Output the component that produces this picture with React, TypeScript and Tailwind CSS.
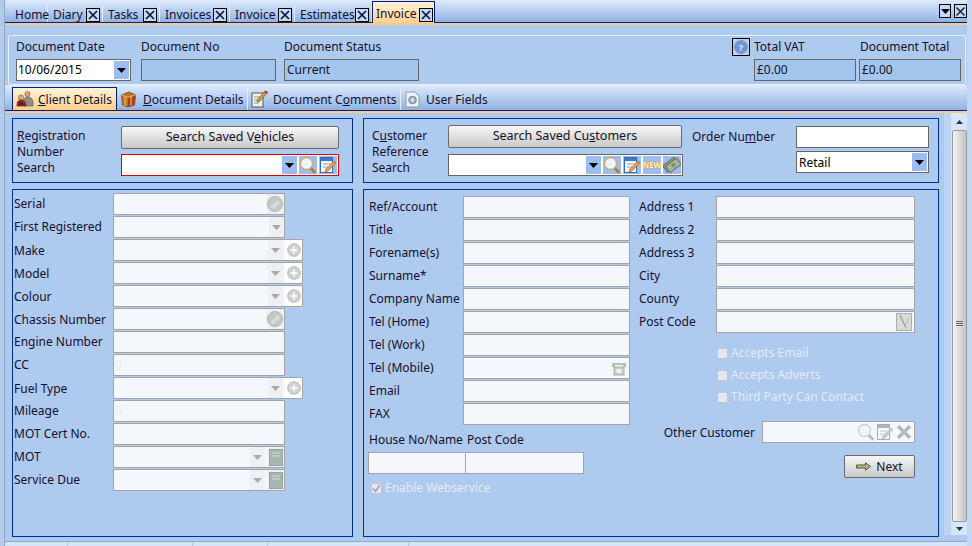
import React from "react";

const NAVY = "border-[#00309c]";

const CloseBox = () => (
  <span className="flex h-[14px] w-[14px] shrink-0 items-center justify-center border border-black bg-[#c3d9f7]">
    <svg width="10" height="10" viewBox="0 0 10 10">
      <path d="M1 1l8 8M9 1l-8 8" stroke="#0b1030" strokeWidth="1.6" />
    </svg>
  </span>
);

const Caret = ({ color = "#000" }: { color?: string }) => (
  <svg width="9" height="5" viewBox="0 0 9 5">
    <path d="M0 0h9L4.5 5z" fill={color} />
  </svg>
);

const CaretBtn = ({ w = "w-[15px]" }: { w?: string }) => (
  <span className={`flex h-[18px] ${w} shrink-0 items-center justify-center bg-[#9dbcf2]`}>
    <Caret />
  </span>
);

const IconBtn = ({ children }: { children: React.ReactNode }) => (
  <span className="flex h-[18px] w-[18px] shrink-0 items-center justify-center bg-[#9dbcf2]">{children}</span>
);

const SearchIcon = () => (
  <svg width="18" height="18" viewBox="0 0 18 18">
    <path d="M10.5 11l5 5" stroke="#a8843f" strokeWidth="3" strokeLinecap="round" />
    <circle cx="7.5" cy="7.5" r="6" fill="#eef5fb" stroke="#c9ad73" strokeWidth="1.4" />
  </svg>
);

const EditIcon = () => (
  <svg width="18" height="18" viewBox="0 0 18 18">
    <rect x="1.5" y="1.5" width="12" height="15" fill="#f3f7fd" stroke="#3a6db5" />
    <rect x="2" y="2" width="11" height="3" fill="#3f78c8" />
    <path d="M4 8h7M4 11h5" stroke="#7ea4d8" />
    <path d="M6 16l1-3 8-8 2 2-8 8z" fill="#ee9c3c" stroke="#a85f16" strokeWidth=".6" />
  </svg>
);

const MoneyIcon = () => (
  <svg width="18" height="18" viewBox="0 0 18 18">
    <g transform="rotate(-38 9 9)">
      <rect x="1" y="4" width="14" height="8" fill="#8d9f88" stroke="#64755f" />
      <rect x="3" y="6" width="14" height="8" fill="#a4b29c" stroke="#64755f" />
      <circle cx="10" cy="10" r="2" fill="#7d8f78" />
    </g>
  </svg>
);

const ClientIcon = () => (
  <svg width="18" height="18" viewBox="0 0 18 18">
    <circle cx="11.5" cy="4" r="2.6" fill="#d9a36b" stroke="#8a5a2c" strokeWidth=".6" />
    <path d="M7 13c0-4 2-6 5-6s5 2 5 6v3H8z" fill="#8e8f86" stroke="#55564e" strokeWidth=".6" />
    <circle cx="5" cy="7.5" r="2.6" fill="#e0a877" stroke="#8a5a2c" strokeWidth=".6" />
    <path d="M1 16c0-4 1-6 4-6s5 2 5 6z" fill="#a3221c" stroke="#5f1410" strokeWidth=".6" />
    <path d="M3 12h4v3H3z" fill="#3d2a20" />
  </svg>
);

const BoxIcon = () => (
  <svg width="17" height="17" viewBox="0 0 17 17">
    <path d="M1.5 4L9 1l6.5 3-1 10L8 16l-5.500-2z" fill="#c46f2a" stroke="#6e3512" strokeWidth=".7" />
    <path d="M8 6.500V16l6.500-2 1-10z" fill="#a8401f" />
    <path d="M1.500 4L8 6.500 15.500 4" fill="none" stroke="#f0b973" />
    <path d="M5 5.500v9.500M11 5.500v9" stroke="#e8c04c" strokeWidth="1.200" />
  </svg>
);

const NoteIcon = () => (
  <svg width="17" height="18" viewBox="0 0 17 18">
    <rect x="1" y="3" width="11" height="14" fill="#f4f1e4" stroke="#4d5a66" />
    <path d="M3 7h7M3 10h6M3 13h5" stroke="#8894a0" />
    <path d="M6 12l1-3 7-8 2 2-7 8z" fill="#d6a13b" stroke="#5d3d10" strokeWidth=".6" />
    <path d="M13 2l2-1.500 2 2-1 1.500z" fill="#c2302a" />
  </svg>
);

const GearDocIcon = () => (
  <svg width="15" height="17" viewBox="0 0 15 17">
    <path d="M1 1h9l4 4v11H1z" fill="#eef3fb" stroke="#8b9db4" />
    <circle cx="7.500" cy="9" r="3.800" fill="#a9b9cc" stroke="#7387a0" />
    <circle cx="7.500" cy="9" r="1.500" fill="#e7edf6" />
  </svg>
);

const HelpIcon = () => (
  <span className="flex h-[18px] w-[18px] items-center justify-center border border-black bg-[#b9d0ef]">
    <span className="flex h-[14px] w-[14px] items-center justify-center rounded-full border border-[#7d9cc8] bg-[#6f97d2] text-[9px] font-bold leading-none text-[#dfe9f8]">
      ?
    </span>
  </span>
);

const DiscIcon = () => (
  <span className="flex h-[20px] w-[18px] shrink-0 items-center justify-center bg-[#eef0f3]">
    <svg width="16" height="16" viewBox="0 0 16 16">
      <circle cx="8" cy="8" r="7.500" fill="#c4c9c8" stroke="#b2b6b6" />
      <path d="M3 11l8-7 2 3-7 6z" fill="#d9dcdc" />
    </svg>
  </span>
);

const PlusBtn = () => (
  <span className="flex h-[20px] w-[17px] shrink-0 items-center justify-center bg-white">
    <svg width="14" height="14" viewBox="0 0 14 14">
      <circle cx="7" cy="7" r="6.300" fill="#cfd3d3" stroke="#b3b8b8" />
      <path d="M7 3.500v7M3.500 7h7" stroke="#f5f6f6" strokeWidth="2" />
    </svg>
  </span>
);

const BookIcon = () => (
  <span className="flex h-[20px] w-[17px] shrink-0 items-center justify-center bg-[#eef0f3]">
    <svg width="14" height="17" viewBox="0 0 14 17">
      <rect x=".5" y=".5" width="13" height="16" fill="#a9b6ae" stroke="#96a69c" />
      <path d="M3 4h8M3 7h8" stroke="#d5dcd8" />
    </svg>
  </span>
);

const GreyCaret = () => (
  <span className="flex h-[20px] w-[15px] shrink-0 items-center justify-center bg-[#eef0f3]">
    <Caret color="#a9a9a9" />
  </span>
);

const Label = ({ children, className = "" }: { children: React.ReactNode; className?: string }) => (
  <span className={`whitespace-nowrap ${className}`}>{children}</span>
);

const ReadOnly = ({ w, value }: { w: string; value?: string }) => (
  <div className={`flex h-[22px] ${w} items-center border border-[#666] bg-[#a3c6ec] pl-[2px]`}>{value}</div>
);

// disabled white field used on both lower panels
const Field = ({
  w = "w-[172px]",
  value,
  children,
}: {
  w?: string;
  value?: string;
  children?: React.ReactNode;
}) => (
  <div className={`flex h-[22px] ${w} items-center justify-end border border-[#a5a5a5] bg-[#f4f7fc]`}>
    {value && <span className="mr-auto pl-[1px] text-[#e6eaf1]">{value}</span>}
    {children}
  </div>
);

const Button = ({ className, children }: { className: string; children: React.ReactNode }) => (
  <div
    className={`flex items-center justify-center rounded-[2px] border border-[#6a6a6a] bg-gradient-to-b from-[#f7f7f7] to-[#c9c9c9] ${className}`}
  >
    {children}
  </div>
);

const vehicleRows: { label: string; kind: string; value?: string; low?: boolean }[] = [
  { label: "Serial", kind: "disc" },
  { label: "First Registered", kind: "caret" },
  { label: "Make", kind: "plus", low: true },
  { label: "Model", kind: "plus", low: true },
  { label: "Colour", kind: "plus", low: true },
  { label: "Chassis Number", kind: "disc", low: true },
  { label: "Engine Number", kind: "plain" },
  { label: "CC", kind: "plain", value: "0" },
  { label: "Fuel Type", kind: "plus", low: true },
  { label: "Mileage", kind: "plain", value: "0" },
  { label: "MOT Cert No.", kind: "plain" },
  { label: "MOT", kind: "book" },
  { label: "Service Due", kind: "book" },
];

const VehicleField = ({ kind, value }: { kind: string; value?: string }) => {
  if (kind === "disc")
    return (
      <Field>
        <DiscIcon />
      </Field>
    );
  if (kind === "caret")
    return (
      <Field>
        <GreyCaret />
      </Field>
    );
  if (kind === "plus")
    return (
      <Field w="w-[190px]">
        <GreyCaret />
        <span className="w-[2px]" />
        <PlusBtn />
      </Field>
    );
  if (kind === "book")
    return (
      <Field>
        <GreyCaret />
        <span className="w-[2px]" />
        <BookIcon />
      </Field>
    );
  return <Field value={value} />;
};

const customerCol1 = ["Ref/Account", "Title", "Forename(s)", "Surname*", "Company Name", "Tel (Home)", "Tel (Work)", "Tel (Mobile)", "Email", "FAX"];
const customerCol2 = ["Address 1", "Address 2", "Address 3", "City", "County", "Post Code"];

const topTabs = [
  { label: "Diary", w: "w-[55px]" },
  { label: "Tasks", w: "w-[57px]" },
  { label: "Invoices", w: "w-[70px]" },
  { label: "Invoice", w: "w-[65px]" },
  { label: "Estimates", w: "w-[77px]" },
];

const Check = ({ label, checked }: { label: string; checked?: boolean }) => (
  <div className="flex h-[22px] items-center text-[#e3ebf7]">
    <span className="mr-[3px] flex h-[11px] w-[11px] items-center justify-center border border-[#c0c6cd] bg-[#e4e8ee]">
      {checked && (
        <svg width="9" height="9" viewBox="0 0 9 9">
          <path d="M1 4.500l2.500 3L8 1" fill="none" stroke="#9aa3ae" strokeWidth="1.500" />
        </svg>
      )}
    </span>
    {label}
  </div>
);

const App = () => {
  return (
    <div
      className="flex h-[546px] w-[972px] overflow-hidden bg-[#c3d8f4] text-[12px] text-[#14102c]"
      style={{ fontFamily: '"Noto Sans", sans-serif' }}
    >
      <div className="h-full w-[5px] shrink-0 border-r border-[#8ea9c9] bg-[#b3cbea]" />
      <div className="flex w-[962px] shrink-0 flex-col bg-[#aecaef]">
        {/* top tabs */}
        <div className="flex h-[23px] shrink-0 items-start border-b border-[#00207f] bg-gradient-to-b from-[#dfebfc] to-[#8fb2e4]">
          <div className="mt-[5px] flex h-[17px] w-[43px] items-center border-r border-[#e6eefb] pt-[2px] pl-[10px]">Home</div>
          {topTabs.map((t) => (
            <div key={t.label + t.w} className={`mt-[5px] flex h-[17px] ${t.w} items-center justify-between border-r border-[#e6eefb] pr-[2px] pl-[5px]`}>
              <span className="whitespace-nowrap pt-[2px]">{t.label}</span>
              <span className="pt-[3px]">
                <CloseBox />
              </span>
            </div>
          ))}
          <div className="mt-[1px] flex h-[22px] w-[63px] items-center justify-between border border-b-0 border-[#00207f] bg-gradient-to-b from-[#fff3d8] to-[#fdcf8f] pr-[1px] pl-[3px]">
            <span className="pt-[2px]">Invoice</span>
            <span className="pt-[5px]">
              <CloseBox />
            </span>
          </div>
          <div className="mt-[4px] ml-auto flex items-center gap-[3px]">
            <span className="flex h-[14px] w-[12px] items-center justify-center border border-black bg-[#c3d9f7]">
              <Caret />
            </span>
            <span className="flex h-[14px] w-[13px] items-center justify-center border border-black bg-[#c3d9f7]">
              <svg width="9" height="9" viewBox="0 0 9 9">
                <path d="M.5.5l8 8M8.500.5l-8 8" stroke="#0b1030" strokeWidth="1.300" />
              </svg>
            </span>
          </div>
        </div>
        <div className="h-[2px] shrink-0 bg-[#fdc98a]" />

        {/* document header */}
        <div className="mt-[10px] ml-[3px] flex h-[50px] w-[958px] shrink-0 rounded-[2px] border border-[#e9f1fc] pl-[7px]">
          <div className="w-[125px]">
            <div className="h-[20px] leading-[22px]">Document Date</div>
            <div className="mt-[3px] flex h-[22px] w-[115px] items-center justify-between border border-[#666] bg-white pr-[1px] pl-[1px]">
              <span className="text-black">10/06/2015</span>
              <CaretBtn />
            </div>
          </div>
          <div className="w-[143px]">
            <div className="h-[20px] leading-[22px]">Document No</div>
            <div className="mt-[3px]">
              <ReadOnly w="w-[135px]" />
            </div>
          </div>
          <div className="w-[448px]">
            <div className="h-[20px] leading-[22px]">Document Status</div>
            <div className="mt-[3px]">
              <ReadOnly w="w-[135px]" value="Current" />
            </div>
          </div>
          <div className="mt-[2px] w-[22px]">
            <HelpIcon />
          </div>
          <div className="w-[105px]">
            <div className="h-[20px] leading-[22px]">Total VAT</div>
            <div className="mt-[3px]">
              <ReadOnly w="w-[102px]" value="£0.00" />
            </div>
          </div>
          <div className="w-[102px]">
            <div className="h-[20px] pl-[1px] leading-[22px]">Document Total</div>
            <div className="mt-[3px]">
              <ReadOnly w="w-[102px]" value="£0.00" />
            </div>
          </div>
        </div>

        {/* section tabs */}
        <div className="flex h-[26px] shrink-0 items-end border-b border-[#00207f] bg-gradient-to-b from-[#dfebfc] to-[#8fb2e4] pl-[7px]">
          <div className="flex h-[23px] w-[105px] items-center border border-b-0 border-[#00207f] bg-gradient-to-b from-[#fff3d8] to-[#fdcf8f] pl-[3px]">
            <ClientIcon />
            <span className="ml-[4px] whitespace-nowrap pt-[2px]">
              <u>C</u>lient Details
            </span>
          </div>
          <div className="flex h-[22px] w-[131px] items-center border-r border-[#e6eefb] pl-[3px]">
            <BoxIcon />
            <span className="ml-[6px] whitespace-nowrap pt-[2px]">
              <u>D</u>ocument Details
            </span>
          </div>
          <div className="flex h-[22px] w-[153px] items-center border-r border-[#e6eefb] pl-[3px]">
            <NoteIcon />
            <span className="ml-[5px] whitespace-nowrap pt-[2px]">
              Document C<u>o</u>mments
            </span>
          </div>
          <div className="flex h-[22px] items-center pl-[4px]">
            <GearDocIcon />
            <span className="ml-[6px] whitespace-nowrap pt-[2px]">User Fields</span>
          </div>
        </div>
        <div className="h-[2px] shrink-0 bg-[#fdc98a]" />

        {/* main */}
        <div className="flex min-h-0 flex-1">
          <div className="grid grid-cols-[341px_576px] grid-rows-[65px_348px] gap-x-[10px] gap-y-[6px] pt-[5px] pl-[7px]">
            <div className={`flex border ${NAVY} pt-[7px] pl-[4px]`}>
              <div className="mt-[2px] w-[104px] leading-[16px]">
                <div>
                  <u>R</u>egistration
                </div>
                <div>Number</div>
                <div>Search</div>
              </div>
              <div className="w-[218px]">
                <Button className="h-[23px] w-[218px] text-[12.5px]">
                  <span>
                    Search Saved V<u>e</u>hicles
                  </span>
                </Button>
                <div className="mt-[5px] flex h-[22px] w-[218px] items-center justify-end gap-[2px] border border-[#e00000] bg-white pr-[1px]">
                  <CaretBtn />
                  <IconBtn>
                    <SearchIcon />
                  </IconBtn>
                  <IconBtn>
                    <EditIcon />
                  </IconBtn>
                </div>
              </div>
            </div>

            <div className={`flex border ${NAVY} pt-[6px] pl-[8px]`}>
              <div className="mt-[3px] w-[76px] leading-[16px]">
                <div>
                  C<u>u</u>stomer
                </div>
                <div>Reference</div>
                <div>Search</div>
              </div>
              <div className="w-[235px]">
                <Button className="h-[23px] w-[234px] text-[12.5px]">
                  <span>
                    Search Saved Cu<u>s</u>tomers
                  </span>
                </Button>
                <div className="mt-[6px] flex h-[22px] w-[235px] items-center justify-end gap-[2px] border border-[#666] bg-white pr-[1px]">
                  <CaretBtn />
                  <IconBtn>
                    <SearchIcon />
                  </IconBtn>
                  <IconBtn>
                    <EditIcon />
                  </IconBtn>
                  <IconBtn>
                    <span className="text-[8px] font-bold leading-none text-[#fff3cf] [text-shadow:0_0_1px_#e8820c,0_0_1px_#e8820c]">NEW</span>
                  </IconBtn>
                  <IconBtn>
                    <MoneyIcon />
                  </IconBtn>
                </div>
              </div>
              <div className="mt-[2px] w-[113px] pl-[9px] leading-[20px]">
                Order Nu<u>m</u>ber
              </div>
              <div className="w-[133px]">
                <div className="mt-[1px] h-[22px] border border-[#666] bg-white" />
                <div className="mt-[3px] flex h-[22px] items-center justify-between border border-[#666] bg-white pr-[1px] pl-[2px]">
                  <span className="pt-[1px] text-black">Retail</span>
                  <CaretBtn />
                </div>
              </div>
            </div>

            <div className={`border ${NAVY} pt-[3px]`}>
              {vehicleRows.map((r) => (
                <div key={r.label} className="flex h-[23px] items-start">
                  <Label className={`h-[21px] w-[100px] pl-[1px] ${r.low ? "leading-[24px]" : "leading-[22px]"}`}>{r.label}</Label>
                  <VehicleField kind={r.kind} value={r.value} />
                </div>
              ))}
            </div>

            <div className={`flex border ${NAVY} pt-[6px] pl-[4px]`}>
              <div className="w-[267px]">
                {customerCol1.map((l) => (
                  <div key={l} className="flex h-[23px] items-start pl-[1px]">
                    <Label className="h-[22px] w-[94px] leading-[22px]">{l}</Label>
                    <Field w="w-[167px]">
                      {l === "Tel (Mobile)" && (
                        <svg className="mr-[2px]" width="16" height="15" viewBox="0 0 16 15">
                          <path d="M1 2h14v4h-3V4H4v2H1z" fill="#b3c0b6" />
                          <rect x="3" y="6" width="10" height="8" fill="#c6d0c9" stroke="#a8b5ab" />
                          <rect x="5.500" y="8" width="5" height="4" fill="#eef1ee" />
                        </svg>
                      )}
                    </Field>
                  </div>
                ))}
                <div className="mt-[5px] flex h-[18px] items-center pl-[1px]">
                  <Label className="w-[98px]">House No/Name</Label>
                  <Label>Post Code</Label>
                </div>
                <div className="mt-[3px] flex">
                  <Field w="w-[98px]" />
                  <div className="-ml-[1px]">
                    <Field w="w-[119px]" />
                  </div>
                </div>
                <div className="mt-[3px] pl-[3px]">
                  <Check label="Enable Webservice" checked />
                </div>
              </div>

              <div className="ml-[4px] flex w-[276px] flex-col">
                {customerCol2.map((l) => (
                  <div key={l} className="flex h-[23px] items-start">
                    <Label className="h-[22px] w-[77px] leading-[22px]">{l}</Label>
                    <Field w="w-[199px]">
                      {l === "Post Code" && (
                        <svg className="mr-[2px]" width="16" height="18" viewBox="0 0 16 18">
                          <rect x=".5" y=".5" width="15" height="17" fill="#d7dcd9" stroke="#aab1ac" />
                          <path d="M4 2l6 13" stroke="#8f9f8f" strokeWidth="1.200" />
                          <path d="M9 14l4-9" stroke="#bcc5bd" />
                        </svg>
                      )}
                    </Field>
                  </div>
                ))}
                <div className="mt-[8px] pl-[78px]">
                  <Check label="Accepts Email" />
                  <Check label="Accepts Adverts" />
                  <Check label="Third Party Can Contact" />
                </div>
                <div className="mt-[13px] flex h-[22px] items-center justify-end">
                  <Label className="mr-[7px] pt-[2px]">Other Customer</Label>
                  <Field w="w-[153px]">
                    <span className="flex items-center gap-[1px] pr-[1px] opacity-50 grayscale">
                      <SearchIcon />
                      <EditIcon />
                      <svg width="18" height="18" viewBox="0 0 18 18">
                        <path d="M3 3l12 12M15 3L3 15" stroke="#6d7f72" strokeWidth="3.500" />
                      </svg>
                    </span>
                  </Field>
                </div>
                <Button className="mt-[12px] h-[23px] w-[71px] gap-[5px] self-end">
                  <svg width="15" height="9" viewBox="0 0 15 9">
                    <path d="M.5 3h9V.8L14.500 4.500 9.500 8.200V6h-9z" fill="#b5b78f" stroke="#55553f" />
                  </svg>
                  <span>Next</span>
                </Button>
              </div>
            </div>
          </div>

          {/* scrollbar */}
          <div className="ml-[5px] mb-[6px] w-[7px] bg-[#bdd5f5]" />
          <div className="mb-[6px] flex w-[16px] flex-col items-center bg-[#d6e6fa]">
            <div className="flex h-[17px] w-full items-center justify-center">
              <svg width="7" height="4" viewBox="0 0 7 4">
                <path d="M0 4h7L3.500 0z" fill="#333" />
              </svg>
            </div>
            <div className="flex h-[392px] w-[15px] items-center justify-center rounded-[2px] border border-[#9a9a9a] bg-gradient-to-r from-[#f4f4f4] to-[#c4c4c4] pb-[6px]">
              <svg width="7" height="7" viewBox="0 0 7 7">
                <path d="M0 1.500h7M0 3.500h7M0 5.500h7" stroke="#666" />
              </svg>
            </div>
            <div className="flex flex-1 items-center justify-center">
              <svg width="7" height="4" viewBox="0 0 7 4">
                <path d="M0 0h7L3.500 4z" fill="#333" />
              </svg>
            </div>
          </div>
        </div>

        {/* status bar */}
        <div className="flex h-[5px] shrink-0 border-t border-[#8ea9c9] bg-[#d5e5f9]">
          <span className="w-[63px] border-r border-[#b5c8e0]" />
          <span className="w-[125px] border-r border-[#b5c8e0]" />
          <span className="w-[75px] border-r border-[#b5c8e0]" />
          <span className="w-[141px] border-r border-[#b5c8e0]" />
        </div>
      </div>
    </div>
  );
};

export default App;
